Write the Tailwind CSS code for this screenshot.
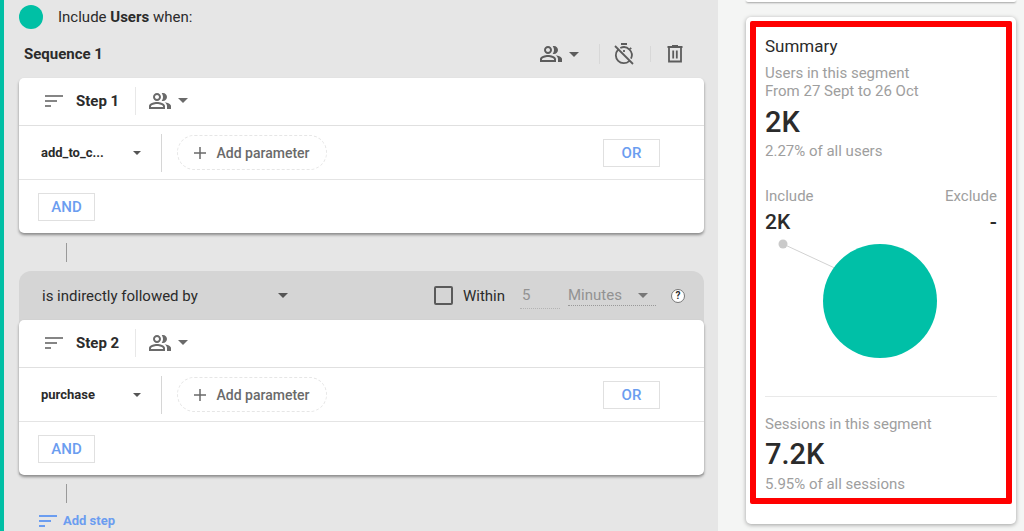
<!DOCTYPE html>
<html lang="en">
<head>
<meta charset="utf-8">
<meta name="viewport" content="width=device-width, initial-scale=1">
<title>Segment builder</title>
<script src="https://cdn.jsdelivr.net/npm/@tailwindcss/browser@4"></script>
</head>
<body class="flex h-screen overflow-hidden bg-[#f4f5f4] font-[Roboto,sans-serif] text-[15px] leading-5 text-[#2b2b2b]">
<svg class="hidden" aria-hidden="true">
  <symbol id="people" viewBox="0 0 24 24"><path d="M16.67 13.13C18.04 14.06 19 15.32 19 17v3h4v-3c0-2.18-3.57-3.47-6.33-3.87zM15 12c2.21 0 4-1.79 4-4s-1.79-4-4-4c-.47 0-.91.1-1.33.24C14.5 5.27 15 6.58 15 8s-.5 2.73-1.33 3.76c.42.14.86.24 1.33.24zM9 13c-2.67 0-8 1.34-8 4v3h16v-3c0-2.66-5.33-4-8-4zm6 5H3v-.99C3.2 16.29 6.3 15 9 15s5.8 1.29 6 2v1zM9 12c2.21 0 4-1.79 4-4s-1.79-4-4-4-4 1.79-4 4 1.79 4 4 4zm0-6c1.1 0 2 .9 2 2s-.9 2-2 2-2-.9-2-2 .9-2 2-2z"/></symbol>
  <symbol id="caret" viewBox="0 0 10 5"><path d="M0 0h10L5 5z"/></symbol>
  <symbol id="sort" viewBox="0 0 18 12"><path d="M0 0h18v2H0zM0 5h12v2H0zM0 10h6v2H0z"/></symbol>
</svg>

<main class="w-[718px] shrink grow-0 border-l-4 border-[#00bfa5] bg-[#e6e6e6] pr-3.5 pl-[15px]">
  <header class="flex h-[34px] items-center gap-[15px]">
    <span class="size-6 rounded-full bg-[#00c0a5]"></span>
    <p>Include <b class="font-bold">Users</b> when:</p>
  </header>

  <div class="flex h-11 items-center pb-1 pr-[17px] pl-[5px]">
    <h2 class="grow font-bold">Sequence 1</h2>
    <button type="button" aria-label="Sequence scope" class="flex items-center gap-1.5 text-[#5c5c5c]"><svg class="size-6 fill-current"><use href="#people"/></svg><svg class="h-[5px] w-2.5 fill-current"><use href="#caret"/></svg></button>
    <span class="ml-5 h-5 w-px bg-[#d8d8d8]"></span>
    <button type="button" aria-label="Remove time limit" class="ml-3 text-[#5c5c5c]"><svg class="size-6" viewBox="0 0 24 24" fill="none" stroke="currentColor" stroke-width="1.800"><path d="M9 2h6M17.6 7.4l1.6-1.6M8.3 6A8 8 0 0 1 19 16.7M17.2 19.1A8 8 0 0 1 5.9 7.8M12 8v2M3 4l18 18"/></svg></button>
    <span class="ml-3.5 h-4 w-px bg-[#d8d8d8]"></span>
    <button type="button" aria-label="Delete sequence" class="ml-3 text-[#5c5c5c]"><svg class="size-6" viewBox="0 0 24 24" fill="none" stroke="currentColor" stroke-width="1.800"><path d="M4.500 5h15M9 4h6M6 5v14.5h12V5M10.2 8.500v8M13.800 8.500v8"/></svg></button>
  </div>

  <section class="rounded-[5px] bg-white shadow-[0_2px_3px_rgba(0,0,0,0.4)]">
    <div class="flex h-12 items-center border-b border-[#e0e0e0] pb-0.5 pl-[26px]">
      <svg class="h-3 w-[18px] fill-[#858585]"><use href="#sort"/></svg>
      <h3 class="ml-[13px] w-12 font-bold">Step 1</h3>
      <span class="ml-[11px] h-7 w-px bg-[#e8e8e8]"></span>
      <button type="button" aria-label="Step 1 scope" class="ml-3 flex items-center gap-1.5 text-[#6a6a6a]"><svg class="size-6 fill-current"><use href="#people"/></svg><svg class="h-[5px] w-2.5 fill-current"><use href="#caret"/></svg></button>
    </div>
    <div class="flex h-[54px] items-center border-b border-[#e4e4e4] pr-11 pl-[22px]">
      <label class="grid w-[100px] items-center">
        <select aria-label="Step 1 event" class="col-start-1 row-start-1 appearance-none text-[13px] font-bold outline-none"><option>add_to_c...</option></select>
        <svg class="pointer-events-none col-start-1 row-start-1 h-1 w-2 justify-self-end fill-[#555]"><use href="#caret"/></svg>
      </label>
      <span class="ml-5 h-[38px] w-px bg-[#d6d6d6]"></span>
      <button type="button" class="ml-[15px] flex h-[35px] w-[150px] items-center justify-center gap-2.5 rounded-full border border-dashed border-[#e6e6e6] text-sm font-medium text-[#6a6a6a]"><svg class="size-3" viewBox="0 0 12 12" stroke="currentColor" stroke-width="1.500"><path d="M6 0v12M0 6h12"/></svg>Add parameter</button>
      <button type="button" class="ml-auto h-7 w-[57px] border border-[#e0e0e0] font-medium text-[#6b9df0]">OR</button>
    </div>
    <div class="flex h-[53px] items-center pl-[19px]">
      <button type="button" class="h-7 w-[57px] border border-[#e0e0e0] font-medium text-[#6b9df0]">AND</button>
    </div>
  </section>

  <div class="flex h-[38px] items-center pl-[47px]"><span class="h-[19px] w-px bg-[#999]"></span></div>

  <section class="rounded-t-xl bg-[#d5d5d5]">
    <div class="flex h-[49px] items-center pr-[19px] pl-[23px]">
      <label class="grid w-[246px] items-center">
        <select aria-label="Step relation" class="col-start-1 row-start-1 appearance-none outline-none"><option>is indirectly followed by</option></select>
        <svg class="pointer-events-none col-start-1 row-start-1 h-[5px] w-2.5 justify-self-end fill-[#555]"><use href="#caret"/></svg>
      </label>
      <label class="ml-auto flex items-center gap-2.5"><input type="checkbox" class="size-[19px] appearance-none rounded-xs border-2 border-[#5a5a5a]">Within</label>
      <input aria-label="Time limit" type="text" value="5" class="ml-[15px] h-[26px] w-10 border-b border-dotted border-[#b4b4b4] pl-0.5 text-[#929292] outline-none">
      <label class="ml-2 grid w-[88px] items-center border-b border-dotted border-[#999]">
        <select aria-label="Time unit" class="col-start-1 row-start-1 appearance-none text-[#929292] outline-none"><option>Minutes</option></select>
        <svg class="pointer-events-none col-start-1 row-start-1 mr-2 h-[5px] w-2.5 justify-self-end fill-[#777]"><use href="#caret"/></svg>
      </label>
      <button type="button" aria-label="Help" class="ml-[15px] size-3.5 rounded-full border border-[#777] bg-white text-[10px] leading-3 font-bold">?</button>
    </div>
    <div class="rounded-[5px] bg-white shadow-[0_2px_3px_rgba(0,0,0,0.4)]">
      <div class="flex h-12 items-center border-b border-[#e0e0e0] pb-0.5 pl-[26px]">
        <svg class="h-3 w-[18px] fill-[#858585]"><use href="#sort"/></svg>
        <h3 class="ml-[13px] w-12 font-bold">Step 2</h3>
        <span class="ml-[11px] h-7 w-px bg-[#e8e8e8]"></span>
        <button type="button" aria-label="Step 2 scope" class="ml-3 flex items-center gap-1.5 text-[#6a6a6a]"><svg class="size-6 fill-current"><use href="#people"/></svg><svg class="h-[5px] w-2.5 fill-current"><use href="#caret"/></svg></button>
      </div>
      <div class="flex h-[54px] items-center border-b border-[#e4e4e4] pr-11 pl-[22px]">
        <label class="grid w-[100px] items-center">
          <select aria-label="Step 2 event" class="col-start-1 row-start-1 appearance-none text-[13px] font-bold outline-none"><option>purchase</option></select>
          <svg class="pointer-events-none col-start-1 row-start-1 h-1 w-2 justify-self-end fill-[#555]"><use href="#caret"/></svg>
        </label>
        <span class="ml-5 h-[38px] w-px bg-[#d6d6d6]"></span>
        <button type="button" class="ml-[15px] flex h-[35px] w-[150px] items-center justify-center gap-2.5 rounded-full border border-dashed border-[#e6e6e6] text-sm font-medium text-[#6a6a6a]"><svg class="size-3" viewBox="0 0 12 12" stroke="currentColor" stroke-width="1.500"><path d="M6 0v12M0 6h12"/></svg>Add parameter</button>
        <button type="button" class="ml-auto h-7 w-[57px] border border-[#e0e0e0] font-medium text-[#6b9df0]">OR</button>
      </div>
      <div class="flex h-[53px] items-center pl-[19px]">
        <button type="button" class="h-7 w-[57px] border border-[#e0e0e0] font-medium text-[#6b9df0]">AND</button>
      </div>
    </div>
  </section>

  <div class="flex h-9 items-center pl-[47px]"><span class="h-[19px] w-px bg-[#999]"></span></div>
  <button type="button" class="ml-5 flex items-center gap-1.5 text-[13px] font-bold text-[#6b9df0]"><svg class="h-3 w-[18px] fill-current"><use href="#sort"/></svg>Add step</button>
</main>

<aside class="min-w-0 flex-1 pr-2 pl-7">
  <div class="h-0.5 rounded-b bg-white shadow-[0_1px_2px_rgba(0,0,0,0.35)]"></div>
  <section class="mt-[15px] rounded-[5px] bg-white p-1 pb-5 shadow-[0_1px_4px_rgba(0,0,0,0.35)]">
    <div class="rounded-xs border-6 border-[#ff0000] px-[9px] pt-[9px] pb-1 text-[#9e9e9e]">
      <h2 class="text-[17px] text-[#2b2b2b]">Summary</h2>
      <p class="mt-2 leading-[18px]">Users in this segment<br>From 27 Sept to 26 Oct</p>
      <p class="mt-1 text-[29px] leading-9 font-medium text-[#2b2b2b]">2K</p>
      <p class="mt-px">2.27% of all users</p>
      <div class="mt-[25px] flex justify-between">
        <div><p>Include</p><p class="mt-1 text-[21px] leading-6 font-medium text-[#2b2b2b]">2K</p></div>
        <div class="text-right"><p>Exclude</p><p class="mt-1 text-[21px] leading-6 font-medium text-[#2b2b2b]">-</p></div>
      </div>
      <svg class="mt-1 h-[128px] w-full" viewBox="0 0 232 128" role="img" aria-label="All users in the segment are included">
        <path d="M18 6l56 26" stroke="#d2d2d2"/><circle cx="18" cy="6" r="4.500" fill="#cacaca"/><circle cx="115" cy="63" r="57" fill="#00c0a7"/>
      </svg>
      <hr class="mt-[30px] border-[#e9e9e9]">
      <p class="mt-[17px]">Sessions in this segment</p>
      <p class="mt-0.5 text-[29px] leading-9 font-medium text-[#2b2b2b]">7.2K</p>
      <p class="mt-0.5">5.95% of all sessions</p>
    </div>
  </section>
</aside>
</body>
</html>
